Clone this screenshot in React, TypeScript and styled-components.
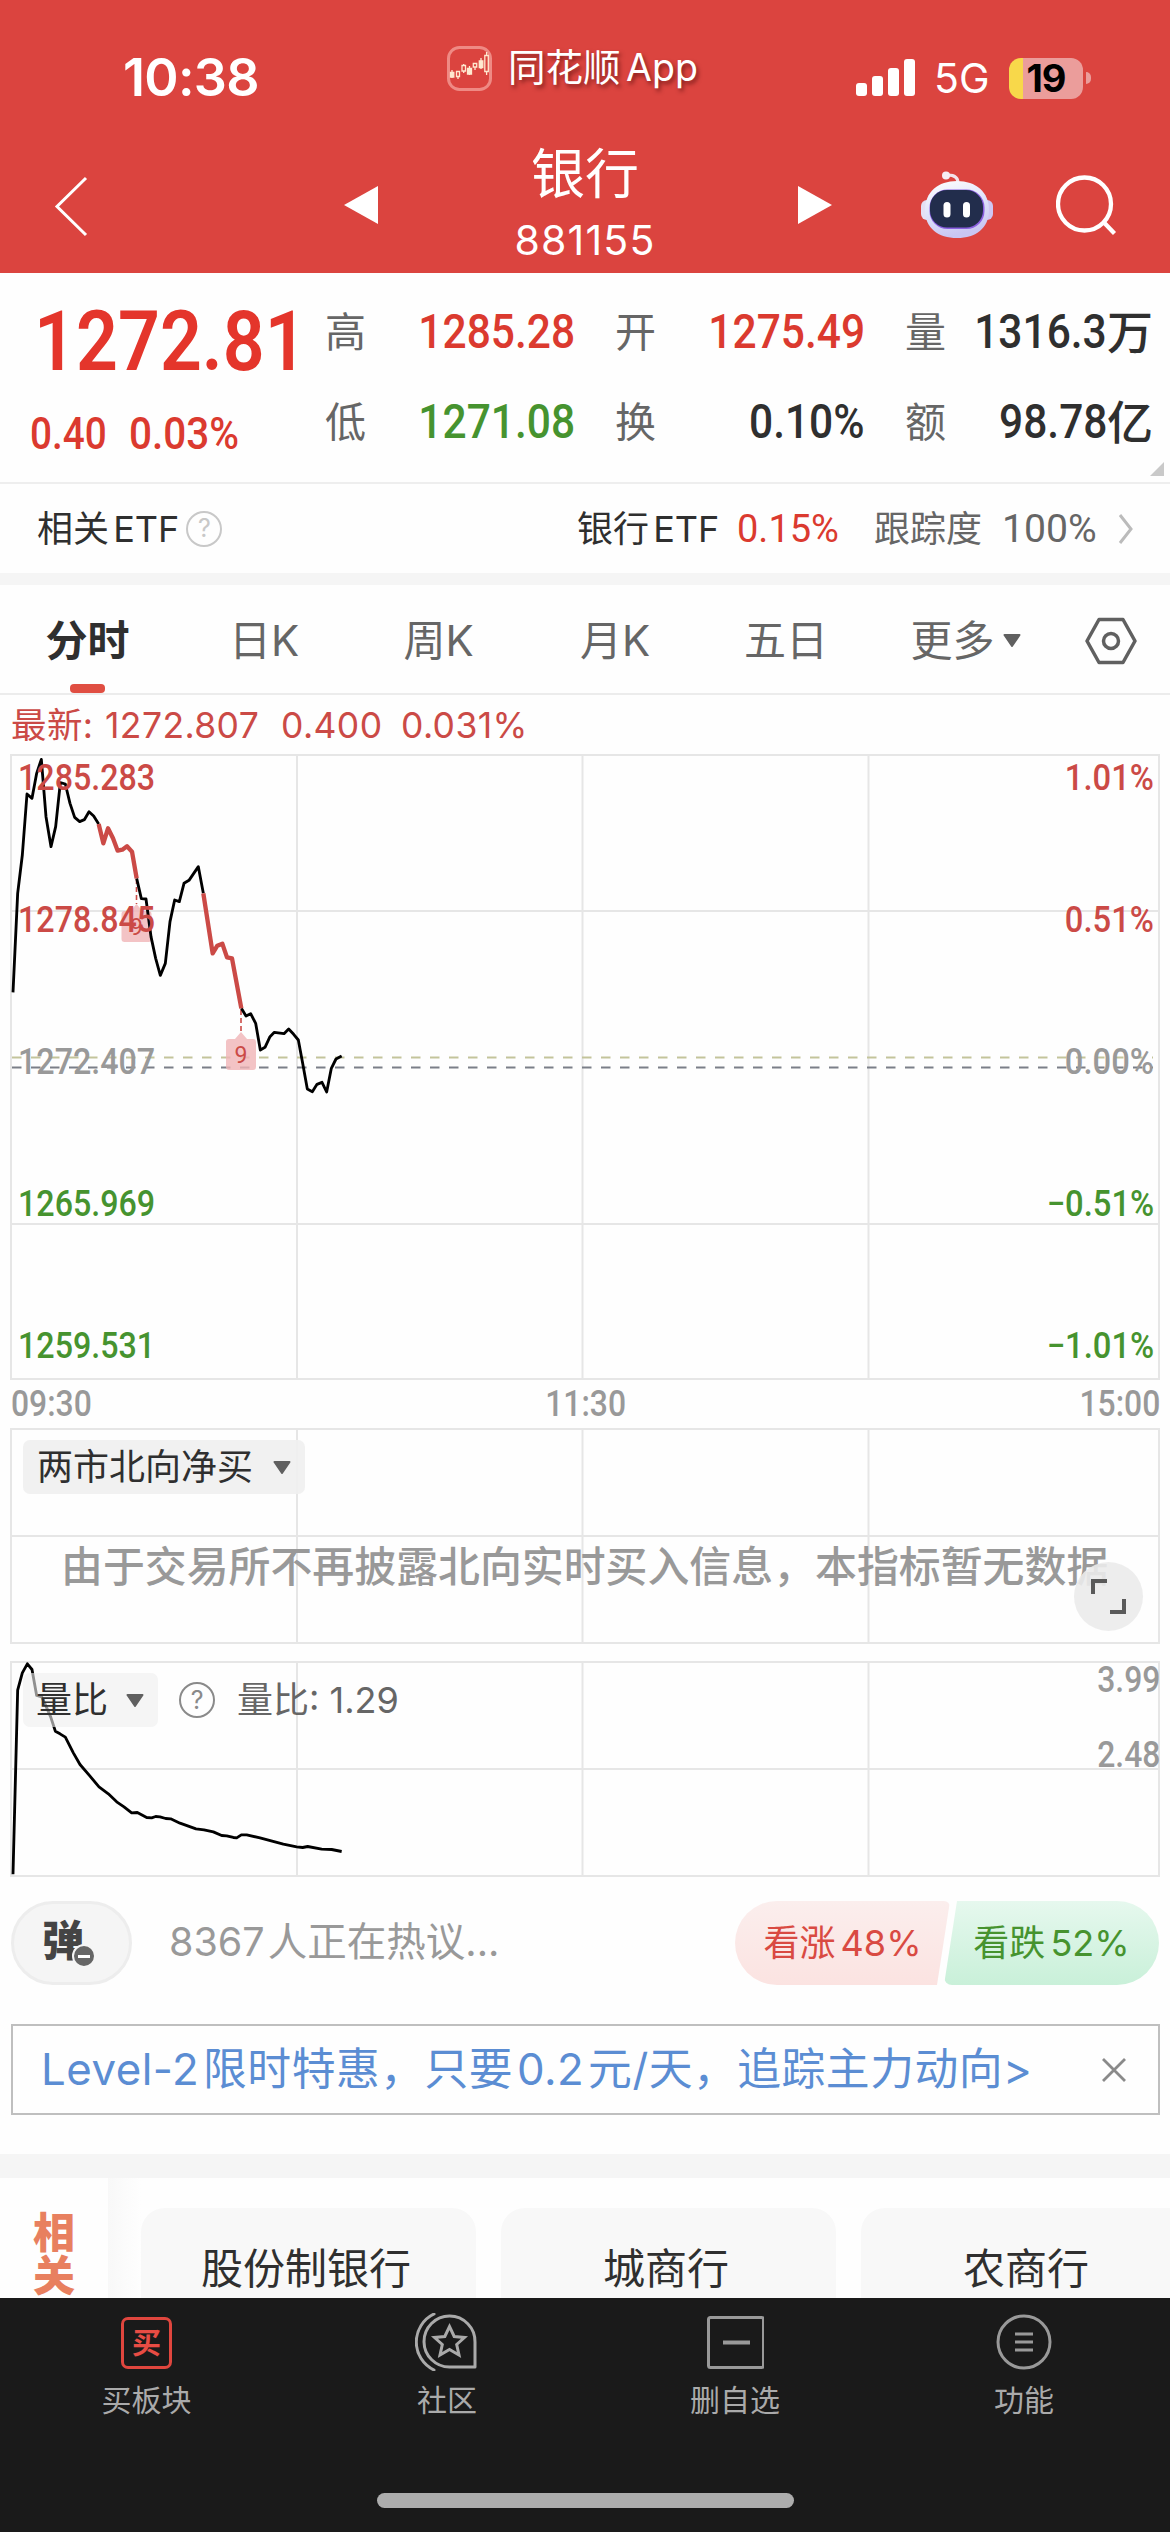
import React from "react";
import styled, { createGlobalStyle } from "styled-components";

const RED = "#db443f";
const QUOTE_RED = "#db3a2f";
const CHART_RED = "#cb4a46";
const GREEN = "#46932f";
const INK = "#2f2f2f";
const MUTED = "#666";
const FAINT = "#999";
const LINE = "#e6e6e6";

const Global = createGlobalStyle`
  * { box-sizing: border-box; }
  body { margin: 0; background: #fff; }
`;

const Screen = styled.div`
  width: 1170px;
  height: 2532px;
  overflow: hidden;
  display: flex;
  flex-direction: column;
  background: #fefefe;
  color: ${INK};
  font-family: Inter, "Noto Sans CJK SC", sans-serif;
  font-size: 36px;
  line-height: 1;
  white-space: nowrap;
`;

/* Narrow numerals used for all prices */
const Num = styled.span<{ $size: number; $color?: string; $weight?: number; $k?: number; $from?: string }>`
  display: inline-block;
  font-family: Roboto, "Noto Sans CJK SC", sans-serif;
  font-size: ${(p) => p.$size}px;
  font-weight: ${(p) => p.$weight ?? 500};
  color: ${(p) => p.$color ?? INK};
  transform: scaleX(${(p) => p.$k ?? 0.885});
  transform-origin: ${(p) => p.$from ?? "left"} center;
`;

/* ---------- header ---------- */
const Header = styled.header`
  height: 273px;
  flex: none;
  background: ${RED};
  color: #fff;
`;
const StatusBar = styled.div`
  height: 136px;
  display: grid;
  grid-template-columns: 447px 1fr 314px;
  padding-top: 45px;
`;
const Clock = styled.div`
  padding: 7px 0 0 123px;
  font-size: 52px;
  font-weight: 600;
  letter-spacing: -0.7px;
`;
const AppTag = styled.div`
  display: flex;
  align-items: center;
  gap: 16px;
  height: 46px;
  font-size: 37.5px;
  word-spacing: -5px;
  text-shadow: 2px 3px 4px rgba(60, 0, 0, 0.55);
`;
const Signals = styled.div`
  display: flex;
  align-items: center;
  height: 66px;
`;
const Network = styled.span`
  font-size: 41px;
  margin-left: 19px;
  width: 75px;
`;
const Battery = styled.div`
  width: 74px;
  height: 41px;
  border-radius: 12px;
  background: linear-gradient(90deg, #f8d84a 14px, #eb9d9b 14px);
  color: #000;
  font-size: 38px;
  font-weight: 700;
  letter-spacing: -1px;
  display: flex;
  align-items: center;
  justify-content: center;
`;
const Nub = styled.i`
  width: 5px;
  height: 12px;
  margin-left: 3px;
  border-radius: 0 6px 6px 0;
  background: #eb9d9b;
`;
const NavBar = styled.nav`
  height: 137px;
  display: grid;
  grid-template-columns: 344px 34px 1fr 34px 89px 72px 63px 114px;
`;
const NavSlot = styled.div<{ $left?: number; $top?: number }>`
  padding: ${(p) => p.$top ?? 0}px 0 0 ${(p) => p.$left ?? 0}px;
`;
const Title = styled.h1`
  margin: 0;
  display: flex;
  flex-direction: column;
  align-items: center;
  font-weight: 400;
  font-size: 54px;
  padding: 10px 6px 0 0;
  line-height: 57px;
`;
const Code = styled.small`
  font-size: 41px;
  line-height: 44px;
  margin-top: 15px;
  letter-spacing: 1.2px;
`;

/* ---------- quote ---------- */
const Quote = styled.section`
  position: relative;
  height: 211px;
  flex: none;
  display: flex;
  border-bottom: 2px solid #eee;
`;
const Price = styled.div`
  width: 325px;
  padding: 27px 0 0 34px;
  display: flex;
  flex-direction: column;
`;
const Change = styled.div`
  display: flex;
  margin: 29px 0 0 -4px;
`;
const ChangeItem = styled.span`
  width: 99px;
`;
const Stats = styled.div`
  flex: 1;
  display: grid;
  grid-template-columns: 290px 290px 248px;
  grid-template-rows: 90px 90px;
  padding-top: 14px;
`;
const Stat = styled.div`
  display: flex;
  align-items: center;
  justify-content: space-between;
  padding-right: 40px;
  font-size: 41px;
  color: ${MUTED};
  &:nth-child(3n) { padding-right: 0; }
`;
const StatValue = styled.span`
  display: flex;
  align-items: center;
  font-size: 46px;
  font-weight: 500;
  color: ${INK};
  width: 200px;
  justify-content: flex-end;
`;
const Corner = styled.i`
  position: absolute;
  right: 6px;
  bottom: 6px;
  border-left: 14px solid transparent;
  border-bottom: 14px solid #c9c9c9;
`;
const Etf = styled.section`
  height: 89px;
  flex: none;
  display: flex;
  align-items: center;
  padding: 0 37px;
  font-size: 36px;
`;
const EtfRight = styled.div`
  margin-left: auto;
  display: flex;
  align-items: center;
  color: ${MUTED};
`;
const Dark = styled.span<{ $w?: number }>`
  color: ${INK};
  width: ${(p) => (p.$w ? p.$w + "px" : "auto")};
  word-spacing: -6px;
`;
const Cell = styled.span<{ $w: number }>`
  width: ${(p) => p.$w}px;
`;
const Band = styled.div<{ $h: number }>`
  height: ${(p) => p.$h}px;
  flex: none;
  background: #f5f5f5;
`;

/* ---------- tabs ---------- */
const Tabs = styled.nav`
  height: 110px;
  flex: none;
  display: grid;
  grid-template-columns: 175px 178px 171px 182px 160px 199px 105px;
  border-bottom: 2px solid #ececec;
  font-size: 42px;
  color: ${MUTED};
`;
const Tab = styled.div<{ $on?: boolean }>`
  position: relative;
  display: flex;
  align-items: center;
  justify-content: center;
  padding-top: 3px;
  color: ${(p) => (p.$on ? INK : MUTED)};
  font-weight: ${(p) => (p.$on ? 700 : 400)};
  &::after {
    content: "";
    display: ${(p) => (p.$on ? "block" : "none")};
    position: absolute;
    bottom: 0;
    width: 35px;
    height: 9px;
    border-radius: 4px;
    background: #e04e42;
  }
`;
const TabInner = styled.span<{ $dx?: number }>`
  display: flex;
  align-items: center;
  gap: 8px;
  margin-left: ${(p) => p.$dx ?? 0}px;
`;

/* ---------- charts ---------- */
const Latest = styled.div`
  height: 60px;
  flex: none;
  display: flex;
  align-items: center;
  padding: 2px 0 0 11px;
  color: ${CHART_RED};
  font-size: 35.5px;
  letter-spacing: 0.4px;
`;
const Panel = styled.section<{ $h: number; $mb?: number }>`
  position: relative;
  height: ${(p) => p.$h}px;
  margin-bottom: ${(p) => p.$mb ?? 0}px;
  flex: none;
`;
const Drawing = styled.svg`
  display: block;
  overflow: visible;
`;
const Axis = styled.div<{ $side: "left" | "right" }>`
  position: absolute;
  top: 1px;
  ${(p) => p.$side}: ${(p) => (p.$side === "left" ? 18 : 16)}px;
  display: flex;
  flex-direction: column;
  align-items: ${(p) => (p.$side === "left" ? "flex-start" : "flex-end")};
`;
const Tick = styled.div<{ $h: number }>`
  height: ${(p) => p.$h}px;
  line-height: 42px;
`;
const RatioAxis = styled(Axis)`
  top: -4px;
  right: 10px;
`;
const Times = styled.div`
  height: 50px;
  flex: none;
  display: flex;
  align-items: center;
  justify-content: space-between;
  padding: 0 10px 0 11px;
`;
const PanelBar = styled.div`
  position: absolute;
  left: 23px;
  top: 11px;
  height: 54px;
  display: flex;
  align-items: center;
  color: ${MUTED};
`;
const Picker = styled.button<{ $clear?: boolean }>`
  height: 54px;
  border: 0;
  border-radius: 7px;
  padding: 0 14px 0 ${(p) => (p.$clear ? 13 : 14)}px;
  margin-right: ${(p) => (p.$clear ? 21 : 0)}px;
  display: flex;
  align-items: center;
  gap: ${(p) => (p.$clear ? 18 : 20)}px;
  font: inherit;
  color: ${INK};
  background: rgba(239, 239, 239, ${(p) => (p.$clear ? 0.6 : 0.9)});
`;
const Ratio = styled.span`
  margin-left: 22px;
`;
const Notice = styled.p`
  position: absolute;
  left: 61px;
  top: 117px;
  margin: 0;
  font-size: 41.9px;
  font-weight: 500;
  color: ${FAINT};
`;
const Expand = styled.button`
  position: absolute;
  left: 1074px;
  top: 133px;
  width: 69px;
  height: 69px;
  border: 0;
  padding: 0;
  border-radius: 50%;
  background: rgba(235, 235, 235, 0.9);
`;

/* ---------- discussion ---------- */
const Talk = styled.section`
  height: 84px;
  flex: none;
  margin: 25px 11px 39px;
  display: flex;
  align-items: center;
  word-spacing: -5px;
`;
const Bullet = styled.button`
  position: relative;
  width: 121px;
  height: 84px;
  border: 3px solid #ededed;
  border-radius: 42px;
  background: #f5f5f5;
  font: inherit;
  font-size: 42px;
  font-weight: 900;
  color: #444;
  padding: 0 17px 4px 0;
`;
const BulletOff = styled.i`
  position: absolute;
  left: 58px;
  top: 40px;
  width: 24px;
  height: 24px;
  border-radius: 50%;
  border: 2px solid #f5f5f5;
  background: #666 linear-gradient(#fff, #fff) center / 12px 3px no-repeat;
`;
const TalkText = styled.span`
  margin-left: 37px;
  font-size: 39.5px;
  word-spacing: -8px;
  color: ${FAINT};
`;
const Votes = styled.div`
  margin-left: auto;
  display: flex;
`;
const Vote = styled.div<{ $up?: boolean }>`
  width: 215px;
  height: 84px;
  display: flex;
  align-items: center;
  justify-content: center;
  font-size: 36px;
  color: ${(p) => (p.$up ? "#d94a42" : GREEN)};
  background: ${(p) =>
    p.$up ? "linear-gradient(#fbeeed, #fbe3e1)" : "linear-gradient(#e6f8ee, #c9f0d9)"};
  border-radius: ${(p) => (p.$up ? "42px 6px 8px 42px" : "6px 42px 42px 8px")};
  clip-path: ${(p) =>
    p.$up
      ? "polygon(0 0, 100% 0, calc(100% - 13px) 100%, 0 100%)"
      : "polygon(13px 0, 100% 0, 100% 100%, 0 100%)"};
  margin-left: ${(p) => (p.$up ? "0" : "-6px")};
`;
const Promo = styled.section`
  height: 91px;
  flex: none;
  margin: 0 10px 39px 11px;
  border: 2px solid #bfbfbf;
  padding: 0 32px 0 28px;
  display: flex;
  align-items: center;
  justify-content: space-between;
  font-size: 43.8px;
  letter-spacing: 0.5px;
  word-spacing: -9px;
  color: #5b8dd3;
`;

/* ---------- related ---------- */
const Related = styled.section`
  flex: 1;
  min-height: 0;
  display: flex;
  overflow: hidden;
`;
const RelatedMark = styled.div`
  width: 108px;
  flex: none;
  padding: 33px 0 0 33px;
  font-size: 42px;
  line-height: 43px;
  font-weight: 900;
  color: #e8805f;
  white-space: normal;
  & > span { display: block; width: 42px; }
`;
const Strip = styled.div`
  flex: none;
  display: flex;
  gap: 25px;
  padding: 30px 0 0 33px;
  background: linear-gradient(90deg, #f8f8f8, #fefefe 33px);
`;
const Chip = styled.div`
  width: 335px;
  height: 130px;
  border-radius: 24px 24px 0 0;
  background: #f8f8f8;
  font-size: 42px;
  line-height: 121px;
  text-align: center;
  padding-right: 5px;
`;

/* ---------- bottom bar ---------- */
const Bottom = styled.footer`
  height: 234px;
  flex: none;
  background: #1a1a1a;
  color: #aaa;
  display: flex;
  flex-direction: column;
  align-items: center;
  justify-content: space-between;
  padding-bottom: 24px;
`;
const Actions = styled.div`
  width: 1170px;
  display: grid;
  grid-template-columns: 293px 308px 268px 310px;
`;
const Action = styled.div`
  display: flex;
  flex-direction: column;
  align-items: center;
  padding-top: 15px;
  gap: 14px;
  font-size: 30px;
`;
const BuyBox = styled.span`
  width: 51px;
  height: 52px;
  margin: 4px 0 2px;
  border: 3px solid #e0463e;
  border-radius: 7px;
  display: flex;
  align-items: center;
  justify-content: center;
  color: #e84c44;
  font-size: 29px;
  font-weight: 700;
`;
const HomeBar = styled.div`
  width: 417px;
  height: 15px;
  border-radius: 8px;
  background: #adadad;
`;

/* ---------- drawings ---------- */
const Caret = () => (
  <svg width="18" height="13" viewBox="0 0 18 13">
    <path d="M1.5 1h15L9 12z" fill="#606060" stroke="#606060" strokeWidth="2" strokeLinejoin="round" />
  </svg>
);

const HelpRing = styled.span<{ $color: string; $ml?: number }>`
  width: 36px;
  height: 36px;
  margin-left: ${(p) => p.$ml ?? 0}px;
  border: 2.5px solid ${(p) => p.$color};
  border-radius: 50%;
  color: ${(p) => p.$color};
  font-size: 25px;
  display: flex;
  align-items: center;
  justify-content: center;
`;

const Candles = () => (
  <svg width="45" height="45" viewBox="0 0 45 45" fill="none">
    <rect x="1.5" y="1.5" width="42" height="42" rx="11" stroke="#ef8a84" strokeWidth="3" />
    <g stroke="#ffe9d0" strokeWidth="1.3">
      <path d="M5 24v8M11 31v2M16.700 18v9M22.500 20v9M28 21v3M34 12v11M39.600 6v3M39.600 26v3" />
      <path d="M9.500 25.500h3v5h-3zM15 19.500h3.500v5.500H15zM26.300 17.500h3.400v3.500h-3.400zM37.800 9.500h3.500v16h-3.500z" fill={RED} />
      <path d="M3.500 26.500h3.300v4.500H3.500zM20.500 22.500h4v5.500h-4zM32.300 15h3.500v6.500h-3.500z" fill="#ffe9d0" />
    </g>
  </svg>
);

const Robot = () => (
  <svg width="74" height="68" viewBox="0 0 74 68">
    <defs>
      <linearGradient id="shell" x1="0" y1="0" x2="0.3" y2="1">
        <stop offset="0" stopColor="#fff" />
        <stop offset="0.550" stopColor="#dfe3fa" />
        <stop offset="1" stopColor="#c9c6f2" />
      </linearGradient>
    </defs>
    <path d="M37 12c0-6-4-8-10-8" fill="none" stroke="#f3e3ea" strokeWidth="3" />
    <circle cx="25" cy="4.500" r="4" fill="#f6eef4" />
    <rect x="0" y="29" width="12" height="20" rx="6" fill="#e4e0f4" />
    <rect x="60" y="29" width="12" height="20" rx="6" fill="#cfc6f3" />
    <path d="M36 10c19 0 32 11 32 29S55 67 36 67 4 57 4 39s13-29 32-29z" fill="url(#shell)" />
    <rect x="8.500" y="18.500" width="55" height="39.500" rx="18" fill="#8a5fe0" />
    <rect x="9" y="19" width="53" height="37.500" rx="17" fill="#222d4c" />
    <rect x="22.500" y="31" width="7" height="15.500" rx="3.500" fill="#fff" />
    <rect x="42" y="31" width="7" height="15.500" rx="3.500" fill="#fff" />
  </svg>
);

const Grid = ({ h, rows }: { h: number; rows: number[] }) => (
  <g stroke={LINE} strokeWidth="2" fill="none">
    <rect x="11" y="0" width="1148" height={h} />
    {[297, 582.5, 868.5].map((x) => (
      <path key={x} d={`M${x} 0V${h}`} />
    ))}
    {rows.map((y) => (
      <path key={y} d={`M11 ${y}H1159`} />
    ))}
  </g>
);

const FALL_ONE = "296,252 310,310 324,265 339,295 353,332 367,329 381,319 396,335 410,415";
const FALL_TWO = "610,460 638,640 652,617 667,611 681,652 696,655 724,805";
const OPENING =
  "39,757 53,460 67,345 81,162 96,175 110,100 124,58 138,230 153,320 167,260 181,128 196,132 210,190 224,232 239,245 253,239 267,215 281,228 296,252";
const MIDDLE =
  "410,415 424,476 438,477 453,590 467,655 481,706 496,670 510,545 524,480 538,485 552,430 567,421 595,380 610,460";
const LATE =
  "724,805 738,828 752,821 767,850 781,930 795,922 810,890 823,877 852,881 866,867 881,883 895,900 908,970 922,1047 937,1055 951,1033 966,1027 980,1056 994,985 1008,957 1025,948";
const RATIO =
  "39,704 53,152 67,100 82,73 96,90 110,168 125,172 138,200 152,232 166,275 180,283 196,293 220,340 240,375 270,410 297,442 325,463 350,487 372,502 395,520 412,519 440,534 455,535 467,531 480,532 497,537 512,538 540,551 588,568 612,571 640,577 665,588 680,589 700,594 710,595 724,586 740,586 780,595 850,614 890,622 908,624 923,621 965,629 995,630 1025,636";

const Nine = ({ x, y, from }: { x: number; y: number; from: number }) => (
  <g>
    <path d={`M${x} ${from}V${y}`} stroke={CHART_RED} strokeWidth="1.6" strokeDasharray="5 3" />
    <path
      d={`M${x - 12} ${y + 7}h6l6-7 6 7h6q3 0 3 3v25q0 3-3 3h-24q-3 0-3-3v-25q0-3 3-3z`}
      fill="#f0b4b6"
      fillOpacity="0.8"
    />
    <text x={x} y={y + 31} textAnchor="middle" fontFamily="Roboto, sans-serif" fontSize="23" fill={CHART_RED}>
      9
    </text>
  </g>
);

const priceTicks = [
  ["1285.283", "1.01%", CHART_RED],
  ["1278.845", "0.51%", CHART_RED],
  ["1272.407", "0.00%", FAINT],
  ["1265.969", "−0.51%", GREEN],
  ["1259.531", "−1.01%", GREEN],
];

const stats = [
  ["高", "1285.28", QUOTE_RED],
  ["开", "1275.49", QUOTE_RED],
  ["量", "1316.3", INK, "万"],
  ["低", "1271.08", GREEN],
  ["换", "0.10%", INK],
  ["额", "98.78", INK, "亿"],
];

export default function App() {
  return (
    <Screen>
      <Global />
      <Header>
        <StatusBar>
          <Clock>10:38</Clock>
          <AppTag>
            <Candles />
            <span>同花顺 App</span>
          </AppTag>
          <Signals>
            <svg width="59" height="38" viewBox="0 0 59 38" fill="#fff">
              <rect x="0" y="24" width="11" height="13" rx="3" />
              <rect x="16" y="17" width="11" height="20" rx="3" />
              <rect x="32" y="9" width="11" height="28" rx="3" />
              <rect x="48" y="0" width="11" height="37" rx="3" />
            </svg>
            <Network>5G</Network>
            <Battery>19</Battery>
            <Nub />
          </Signals>
        </StatusBar>
        <NavBar>
          <NavSlot $left={54} $top={40}>
            <svg width="34" height="62" viewBox="0 0 34 62">
              <path d="M32 2 3 30.500 32 59" fill="none" stroke="#fff" strokeWidth="3" />
            </svg>
          </NavSlot>
          <NavSlot $top={50}>
            <svg width="34" height="38" viewBox="0 0 34 38">
              <path d="M34 0v38L0 19z" fill="#fff" />
            </svg>
          </NavSlot>
          <Title>
            银行
            <Code>881155</Code>
          </Title>
          <NavSlot $top={50}>
            <svg width="34" height="38" viewBox="0 0 34 38">
              <path d="M0 0v38l34-19z" fill="#fff" />
            </svg>
          </NavSlot>
          <span />
          <NavSlot $top={35}>
            <Robot />
          </NavSlot>
          <span />
          <NavSlot $top={39}>
            <svg width="62" height="62" viewBox="0 0 62 62" fill="none" stroke="#fff" strokeWidth="4.300">
              <circle cx="28.500" cy="29" r="26.500" />
              <path d="m47.500 47 11 11.500" />
            </svg>
          </NavSlot>
        </NavBar>
      </Header>

      <Quote>
        <Price>
          <Num $size={83} $weight={600} $color="#e4352b" $k={0.885}>1272.81</Num>
          <Change>
            <ChangeItem><Num $size={44} $color={QUOTE_RED} $k={0.88}>0.40</Num></ChangeItem>
            <ChangeItem><Num $size={44} $color={QUOTE_RED} $k={0.92}>0.03%</Num></ChangeItem>
          </Change>
        </Price>
        <Stats>
          {stats.map(([label, value, color, unit]) => (
            <Stat key={label}>
              {label}
              <StatValue>
                <Num $size={48} $color={color} $from="right">{value}</Num>
                {unit}
              </StatValue>
            </Stat>
          ))}
        </Stats>
        <Corner />
      </Quote>

      <Etf>
        <Dark>相关 ETF</Dark>
        <HelpRing $color="#c8c8c8" $ml={7}>?</HelpRing>
        <EtfRight>
          <Dark $w={160}>银行 ETF</Dark>
          <Cell $w={137}><Num $size={38} $weight={400} $color={QUOTE_RED} $k={1}>0.15%</Num></Cell>
          <Cell $w={128}>跟踪度</Cell>
          <Cell $w={116}><Num $size={38} $weight={400} $color={MUTED} $k={1.03}>100%</Num></Cell>
          <svg width="15" height="30" viewBox="0 0 15 30">
            <path d="m2 1 11 14L2 29" fill="none" stroke="#bbb" strokeWidth="3" />
          </svg>
        </EtfRight>
      </Etf>
      <Band $h={12} />

      <Tabs>
        <Tab $on>分时</Tab>
        <Tab>日K</Tab>
        <Tab>周K</Tab>
        <Tab>月K</Tab>
        <Tab>五日</Tab>
        <Tab>
          <TabInner>更多<Caret /></TabInner>
        </Tab>
        <Tab>
          <TabInner $dx={-14}>
            <svg width="52" height="48" viewBox="0 0 52 48" fill="none" stroke="#606060" strokeWidth="3.500">
              <path d="M14 2.500h24L50 24 38 45.500H14L2 24z" strokeLinejoin="round" />
              <circle cx="26" cy="24" r="7.500" />
            </svg>
          </TabInner>
        </Tab>
      </Tabs>

      <Latest>
        <Cell $w={94}>最新:</Cell>
        <Cell $w={176}>1272.807</Cell>
        <Cell $w={120}>0.400</Cell>
        <span>0.031%</span>
      </Latest>

      <Panel $h={624}>
        <Drawing width="1170" height="624" viewBox="0 0 1170 624">
          <Grid h={624} rows={[156, 469]} />
          <path d="M12 302.500H1153" stroke="#c3c49b" strokeWidth="2" strokeDasharray="9.500 9.500" />
          <path d="M12 312.500H1153" stroke="#7b7f88" strokeWidth="2" strokeDasharray="9.500 9.500" />
          <Nine x={136.5} y={149} from={124} />
          <Nine x={241} y={277} from={255} />
          <g transform="translate(0 -15) scale(0.33333)" fill="none" strokeLinejoin="round">
            <g stroke="#000" strokeWidth="8.500">
              <polyline points={OPENING} />
              <polyline points={MIDDLE} />
              <polyline points={LATE} />
            </g>
            <g stroke={CHART_RED} strokeWidth="13">
              <polyline points={FALL_ONE} />
              <polyline points={FALL_TWO} />
            </g>
          </g>
        </Drawing>
        <Axis $side="left">
          {priceTicks.map(([price, , color]) => (
            <Tick key={price} $h={142}><Num $size={36} $color={color} $k={0.895}>{price}</Num></Tick>
          ))}
        </Axis>
        <Axis $side="right">
          {priceTicks.map(([, pct, color]) => (
            <Tick key={pct} $h={142}><Num $size={36} $color={color} $k={0.91} $from="right">{pct}</Num></Tick>
          ))}
        </Axis>
      </Panel>
      <Times>
        <Num $size={36} $color={FAINT}>09:30</Num>
        <Num $size={36} $color={FAINT} $from="center">11:30</Num>
        <Num $size={36} $color={FAINT} $from="right">15:00</Num>
      </Times>

      <Panel $h={214} $mb={19}>
        <Drawing width="1170" height="214" viewBox="0 0 1170 214">
          <Grid h={214} rows={[107]} />
        </Drawing>
        <PanelBar>
          <Picker>两市北向净买<Caret /></Picker>
        </PanelBar>
        <Notice>由于交易所不再披露北向实时买入信息，本指标暂无数据</Notice>
        <Expand>
          <Drawing width="69" height="69" viewBox="0 0 69 69" fill="none" stroke="#5a5a5a" strokeWidth="4">
            <path d="M19 32V19h14M50 37v13H36" />
          </Drawing>
        </Expand>
      </Panel>

      <Panel $h={214}>
        <Drawing width="1170" height="214" viewBox="0 0 1170 214">
          <Grid h={214} rows={[107]} />
          <g transform="translate(0 -22.500) scale(0.33333)" fill="none">
            <polyline points={RATIO} stroke="#000" strokeWidth="8.500" strokeLinejoin="round" />
          </g>
        </Drawing>
        <PanelBar>
          <Picker $clear>量比<Caret /></Picker>
          <HelpRing $color="#8a8a8a">?</HelpRing>
          <Ratio>量比: 1.29</Ratio>
        </PanelBar>
        <RatioAxis $side="right">
          <Tick $h={75}><Num $size={36} $color={FAINT} $from="right">3.99</Num></Tick>
          <Tick $h={42}><Num $size={36} $color={FAINT} $from="right">2.48</Num></Tick>
        </RatioAxis>
      </Panel>

      <Talk>
        <Bullet>弹<BulletOff /></Bullet>
        <TalkText>8367 人正在热议...</TalkText>
        <Votes>
          <Vote $up>看涨 48%</Vote>
          <Vote>看跌 52%</Vote>
        </Votes>
      </Talk>

      <Promo>
        <span>Level-2 限时特惠，只要 0.2 元/天，追踪主力动向&gt;</span>
        <svg width="24" height="24" viewBox="0 0 24 24">
          <path d="m1 1 22 22M23 1 1 23" stroke="#8a8a8a" strokeWidth="2.800" />
        </svg>
      </Promo>
      <Band $h={24} />

      <Related>
        <RelatedMark><span>相关</span></RelatedMark>
        <Strip>
          <Chip>股份制银行</Chip>
          <Chip>城商行</Chip>
          <Chip>农商行</Chip>
        </Strip>
      </Related>

      <Bottom>
        <Actions>
          <Action>
            <BuyBox>买</BuyBox>
            买板块
          </Action>
          <Action>
            <svg width="64" height="58" viewBox="0 0 64 58" fill="none" stroke="#aaa" strokeWidth="3">
              <path d="M60 54H35a25.500 25.500 0 1 1 25-25z" strokeLinejoin="round" />
              <path d="M19 1a31 31 0 0 0 0 56" strokeLinecap="round" />
              <path d="m34.500 13.500 4.700 10 10.300 1-7.800 7 2.300 10.500-9.500-5.500-9.500 5.500 2.300-10.500-7.800-7 10.300-1z" />
            </svg>
            社区
          </Action>
          <Action>
            <svg width="58" height="58" viewBox="0 0 58 58" fill="none" stroke="#999" strokeWidth="3">
              <rect x="2.500" y="4.500" width="55" height="50" rx="2" />
              <path d="M17 29.500h27" strokeWidth="4" />
            </svg>
            删自选
          </Action>
          <Action>
            <svg width="58" height="58" viewBox="0 0 58 58" fill="none" stroke="#999" strokeWidth="3">
              <circle cx="29" cy="29" r="26" />
              <path d="M20 21h18M20 29h18M20 37h18" />
            </svg>
            功能
          </Action>
        </Actions>
        <HomeBar />
      </Bottom>
    </Screen>
  );
}
